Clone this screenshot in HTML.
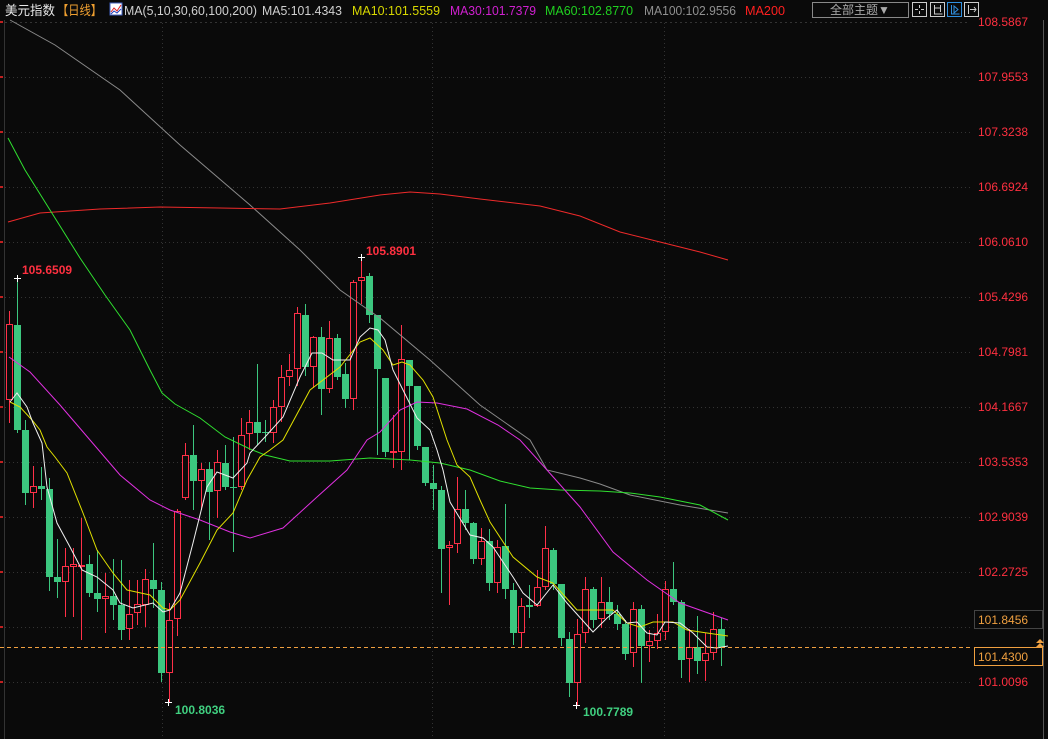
<!DOCTYPE html>
<html><head><meta charset="utf-8">
<style>
html,body{margin:0;padding:0;background:#0a0a0a;width:1048px;height:739px;overflow:hidden}
svg{display:block}
text{font-family:"Liberation Sans","Noto Sans CJK SC",sans-serif}
</style></head>
<body>
<svg id="s" width="1048" height="739" viewBox="0 0 1048 739" xmlns="http://www.w3.org/2000/svg">
<rect width="1048" height="739" fill="#0a0a0a"/>
<!-- header -->
<text x="5" y="15" font-size="13" fill="#e8e8e8" textLength="50" lengthAdjust="spacingAndGlyphs">美元指数</text>
<text x="57" y="15" font-size="13" fill="#f0a030" textLength="45" lengthAdjust="spacingAndGlyphs">【日线】</text>
<rect x="110" y="3" width="12" height="12" fill="#fff" stroke="#4060c0"/>
<polyline points="111,12 114,8 117,11 121,5" fill="none" stroke="#e02020" stroke-width="1"/>
<polyline points="111,14 114,11 117,13 121,9" fill="none" stroke="#2040c0" stroke-width="1"/>
<text x="124" y="15" font-size="13" fill="#d0d0d0" textLength="133" lengthAdjust="spacingAndGlyphs">MA(5,10,30,60,100,200)</text>
<text x="262" y="15" font-size="13" fill="#d0d0d0" textLength="80" lengthAdjust="spacingAndGlyphs">MA5:101.4343</text>
<text x="352" y="15" font-size="13" fill="#d8d800" textLength="88" lengthAdjust="spacingAndGlyphs">MA10:101.5559</text>
<text x="450" y="15" font-size="13" fill="#d020d0" textLength="86" lengthAdjust="spacingAndGlyphs">MA30:101.7379</text>
<text x="545" y="15" font-size="13" fill="#20d020" textLength="88" lengthAdjust="spacingAndGlyphs">MA60:102.8770</text>
<text x="644" y="15" font-size="13" fill="#909090" textLength="92" lengthAdjust="spacingAndGlyphs">MA100:102.9556</text>
<text x="745" y="15" font-size="13" fill="#ff2020" textLength="40" lengthAdjust="spacingAndGlyphs">MA200</text>
<rect x="812.5" y="2.5" width="96" height="15" fill="none" stroke="#888"/>
<text x="830" y="14" font-size="12" fill="#aaa">全部主题▼</text>
<g fill="none" stroke="#ccc">
<rect x="912.5" y="2.5" width="14" height="14"/>
<rect x="930.5" y="2.5" width="14" height="14"/>
<rect x="947.5" y="2.5" width="14" height="14" stroke="#3090e0"/>
<rect x="964.5" y="2.5" width="14" height="14"/>
<path d="M919.5 5v3M919.5 11v3M915 9.5h3M921 9.5h3"/>
<path d="M934.5 5v9h8M940.5 5v7M934.5 8h6"/>
<path d="M951.5 5v9h8M954 6l4 3.5-4 3.5z" stroke="#3090e0"/>
<path d="M968.5 5v9M970 9.5h6M974 7l2 2.5-2 2.5"/>
</g>
<line x1="0" y1="22.5" x2="970" y2="22.5" stroke="#333" stroke-dasharray="2,3"/>
<line x1="1043.5" y1="20" x2="1043.5" y2="739" stroke="#555"/>
<line x1="4.5" y1="20" x2="4.5" y2="739" stroke="#333"/>
<g id="grid" stroke="#333" stroke-dasharray="1,3"></g>
<g id="axis"></g>
<g id="candles"></g>
<g fill="none" stroke-width="1">
<polyline stroke="#8a8a8a" points="10,20 55,45 120,90 180,145 250,205 300,250 340,290 380,318 430,360 480,405 530,440 547,470 580,478 600,484 630,495 680,505 728,513"/>
<polyline stroke="#ee2a2a" points="8,222 40,213 100,209 160,207 220,208 280,209 330,203 380,195 410,192 440,194 480,199 540,206 580,216 620,232 660,242 700,252 728,260"/>
<polyline stroke="#30e030" points="8,138 25,170 50,210 80,258 105,295 130,330 150,370 162,393 175,404 200,418 225,437 250,449 265,455 290,461 330,461 370,458 410,460 440,463 470,470 500,481 530,488 560,490 600,491 630,493 660,497 700,505 728,520"/>
<polyline stroke="#e030e0" points="9,357 30,372 60,405 90,440 120,475 150,500 170,510 200,520 230,532 250,538 283,528 317,497 347,470 367,440 380,432 400,410 417,402 437,403 467,409 498,425 520,440 547,470 563,488 580,507 613,552 647,580 680,603 728,620"/>
<polyline stroke="#e0e000" points="10,402 20,407 32,420 40,430 47,447 55,457 67,473 83,513 97,550 113,573 127,590 150,595 163,608 170,610 180,600 200,563 217,530 233,513 247,480 260,457 270,450 283,440 310,390 340,367 360,342 370,338 383,350 393,365 402,362 410,365 423,380 433,397 447,440 457,465 470,477 480,500 490,522 513,557 537,577 553,583 577,610 613,610 627,623 640,627 653,622 673,622 687,630 707,633 728,636"/>
<polyline stroke="#f0f0f0" points="10,402 17,393 27,407 33,423 42,443 47,487 57,523 70,547 82,570 97,577 113,590 120,603 133,608 153,603 163,612 170,610 180,593 193,543 207,487 217,472 233,478 247,463 250,453 265,437 283,417 300,377 312,353 322,353 333,360 350,360 360,337 370,328 378,330 385,340 393,370 403,390 417,418 430,430 437,450 443,470 450,502 470,535 483,538 493,547 513,577 523,593 537,605 553,585 567,603 593,632 607,618 617,610 627,623 637,622 647,633 657,635 665,622 680,623 693,633 707,647 717,648 728,646"/>
</g>
<line x1="0" y1="647.5" x2="970" y2="647.5" stroke="#f0a040" stroke-dasharray="4,3"/>
<!-- annotations -->
<g font-size="12" font-weight="bold">
<text x="22" y="274" fill="#ff3040">105.6509</text>
<text x="366" y="255" fill="#ff3040">105.8901</text>
<text x="175" y="714" fill="#40d080">100.8036</text>
<text x="583" y="716" fill="#40d080">100.7789</text>
</g>
<g stroke="#fff">
<path d="M14 278.5h7M17.5 275v7"/>
<path d="M358 257.5h7M361.5 254v7"/>
<path d="M165 702.5h7M168.5 699v7"/>
<path d="M573 705.5h7M576.5 702v7"/>
</g>
<!-- right labels -->
<rect x="974.5" y="610.5" width="68" height="18" fill="#0a0a0a" stroke="#444"/>
<text x="978" y="624" font-size="12" fill="#f0a040">101.8456</text>
<rect x="974.5" y="647.5" width="68" height="18" fill="#0a0a0a" stroke="#f0a040"/>
<text x="978" y="661" font-size="12" fill="#f0a040">101.4300</text>
<path d="M1036 643h8l-4-4zM1036 647h8l-4-4z" fill="#f0a040"/>
</svg>
<script>
var NS="http://www.w3.org/2000/svg";
function el(p,t,a,txt){var e=document.createElementNS(NS,t);for(var k in a)e.setAttribute(k,a[k]);if(txt)e.textContent=txt;p.appendChild(e);return e;}
var ys=[22,77,132,187,242,297,352,407,462,517,572,627,682];
var vs=["108.5867","107.9553","107.3238","106.6924","106.0610","105.4296","104.7981","104.1667","103.5353","102.9039","102.2725","101.6410","101.0096"];
var g=document.getElementById("grid"),ax=document.getElementById("axis");
ys.forEach(function(y,i){
 if(i>0)el(g,"line",{x1:5,y1:y+0.5,x2:970,y2:y+0.5});
 el(ax,"rect",{x:0,y:y-1,width:3,height:2,fill:"#c02020"});
 if(i!=11)el(ax,"text",{x:978,y:y+4,"font-size":12,fill:"#ff3040"},vs[i]);
});
[162,432,664].forEach(function(x){el(g,"line",{x1:x+0.5,y1:23,x2:x+0.5,y2:739});});
var C=[
[0,'r',324,400,311,423],[1,'g',325,430,278,433],[2,'g',430,493,420,505],[3,'r',486,493,466,508],[4,'g',486,489,467,500],
[5,'g',489,577,478,591],[6,'g',577,582,539,598],[7,'r',566,582,548,617],[8,'r',564,567,548,617],[9,'r',565,567,518,640],
[10,'g',564,593,555,597],[11,'g',593,599,550,612],[12,'r',596,599,573,633],[13,'g',596,605,559,620],[14,'g',605,630,560,640],
[15,'r',614,629,580,640],[16,'r',604,613,580,625],[17,'r',579,605,569,627],[18,'g',580,589,543,608],[19,'g',590,673,582,682],
[20,'r',620,673,603,702],[21,'r',511,619,509,636],[22,'r',455,498,443,500],[23,'g',455,481,425,510],[24,'r',469,481,463,510],
[25,'g',469,492,462,540],[26,'r',462,491,450,518],[27,'g',463,487,445,490],[28,'g',487,488,437,552],[29,'r',435,487,418,490],
[30,'r',422,434,410,450],[31,'g',422,433,364,445],[32,'g',432,433,420,442],[33,'r',407,433,400,443],[34,'r',377,407,365,422],
[35,'r',370,377,354,386],[36,'r',313,369,307,386],[37,'g',315,367,304,376],[38,'r',337,367,336,388],[39,'g',337,389,327,415],
[40,'r',338,389,321,393],[41,'g',338,377,334,380],[42,'g',374,399,363,408],[43,'r',282,399,280,410],[44,'r',277,281,257,304],
[45,'g',276,315,273,323],[46,'g',315,369,315,455],[47,'g',378,452,378,457],[48,'r',451,453,415,468],[49,'r',359,452,325,470],
[50,'g',360,386,360,460],[51,'g',386,446,386,450],[52,'g',447,483,447,486],[53,'g',483,489,465,510],[54,'g',490,549,486,593],
[55,'r',545,548,541,605],[56,'r',509,544,477,553],[57,'g',509,523,490,530],[58,'g',523,559,522,564],[59,'r',541,559,528,565],
[60,'g',541,583,529,591],[61,'r',547,583,540,593],[62,'g',546,589,504,599],[63,'g',590,633,583,645],[64,'r',606,633,598,648],
[65,'g',605,607,585,618],[66,'r',587,606,570,607],[67,'r',548,587,526,590],[68,'g',550,584,548,590],[69,'g',584,638,584,646],
[70,'g',639,683,632,697],[71,'r',634,683,619,705],[72,'r',589,633,577,643],[73,'g',589,620,587,628],[74,'r',602,619,577,628],
[75,'g',602,614,587,620],[76,'g',614,624,605,630],[77,'g',624,654,620,660],[78,'r',609,653,602,667],[79,'g',609,646,605,683],
[80,'r',641,646,630,662],[81,'r',633,641,614,649],[82,'r',589,632,581,640],[83,'g',589,602,562,605],[84,'g',602,660,600,678],
[85,'r',647,659,629,682],[86,'g',647,661,616,674],[87,'r',653,661,633,681],[88,'r',629,653,612,660],[89,'g',629,647,618,666]
];
var cg=document.getElementById("candles");
C.forEach(function(c){
 var x=9+8*c[0],red=c[1]=='r',col=red?'#ff3048':'#3cc77f';
 el(cg,"line",{x1:x+0.5,y1:c[4],x2:x+0.5,y2:c[5],stroke:col});
 var h=Math.max(c[3]-c[2],1);
 if(red)el(cg,"rect",{x:x-2.5,y:c[2]+0.5,width:6,height:Math.max(h-1,1),fill:"#0a0a0a",stroke:col});
 else el(cg,"rect",{x:x-3,y:c[2],width:7,height:h,fill:col});
});
</script>
</body></html>
